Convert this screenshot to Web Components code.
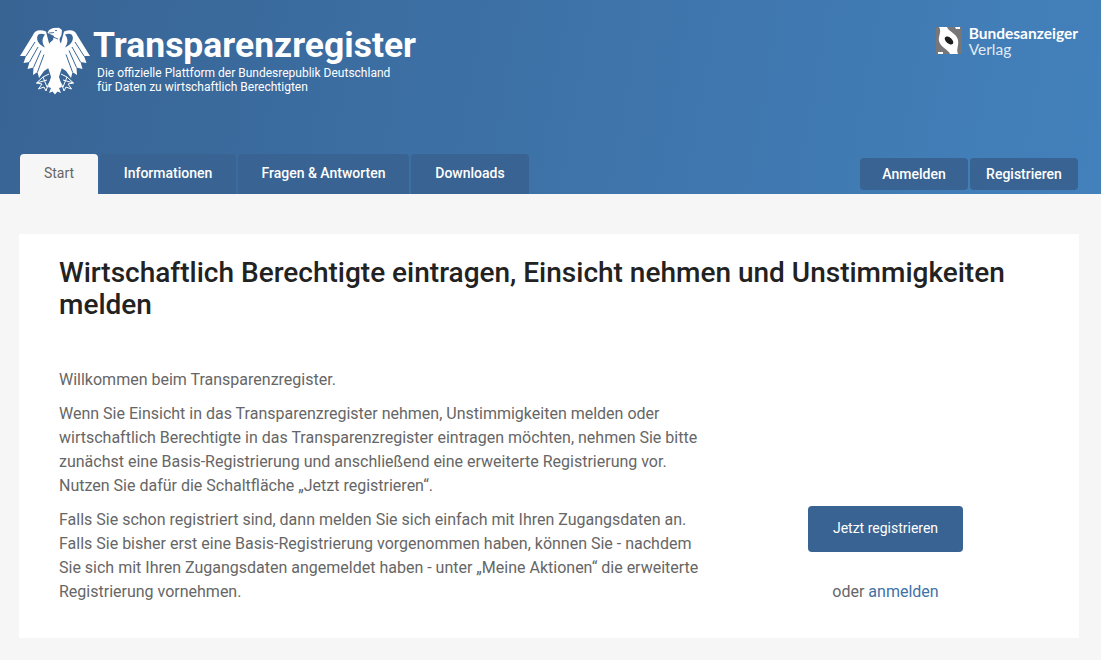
<!DOCTYPE html>
<html lang="de">
<head>
<meta charset="utf-8">
<title>Transparenzregister</title>
<style>
	html, body { margin: 0; padding: 0; background: #f6f6f6; }
	body { font-family: Roboto, "Liberation Sans", sans-serif; }
</style>
</head>
<body>
<tr-header>
	<tr-tab slot="tabs" active>Start</tr-tab>
	<tr-tab slot="tabs" width="136">Informationen</tr-tab>
	<tr-tab slot="tabs" width="171">Fragen &amp; Antworten</tr-tab>
	<tr-tab slot="tabs" width="118">Downloads</tr-tab>
	<tr-login slot="actions">Anmelden</tr-login>
	<tr-login slot="actions">Registrieren</tr-login>
</tr-header>
<tr-main>
	<h1 slot="title">Wirtschaftlich Berechtigte eintragen, Einsicht nehmen und Unstimmigkeiten melden</h1>
	<p>Willkommen beim Transparenzregister.</p>
	<p>Wenn Sie Einsicht in das Transparenzregister nehmen, Unstimmigkeiten melden oder<br>wirtschaftlich Berechtigte in das Transparenzregister eintragen möchten, nehmen Sie bitte<br>zunächst eine Basis-Registrierung und anschließend eine erweiterte Registrierung vor.<br>Nutzen Sie dafür die Schaltfläche „Jetzt registrieren“.</p>
	<p>Falls Sie schon registriert sind, dann melden Sie sich einfach mit Ihren Zugangsdaten an.<br>Falls Sie bisher erst eine Basis-Registrierung vorgenommen haben, können Sie - nachdem<br>Sie sich mit Ihren Zugangsdaten angemeldet haben - unter „Meine Aktionen“ die erweiterte<br>Registrierung vornehmen.</p>
</tr-main>

<script>
class TrEagle extends HTMLElement {
	constructor() {
		super();
		this.attachShadow({ mode: 'open' });
		this.shadowRoot.innerHTML = `
			<style>
				:host { display: block; flex: none; width: 70px; height: 68px; }
				svg { display: block; }
			</style>
			<svg width="70" height="68" viewBox="0 0 70 68">
				<defs>
					<g id="half">
						<!-- wing outline with feather tips -->
						<path fill="#fff" d="M26 4.5 C20 2 14.5 3 13 8 L0 29 L6 29 L3.5 36 L9.5 35 L7.5 42 L13.5 40.5 L13 48 L17.5 45 L19 51 L24 44 L30 40 L30 20 Z"/>
						<!-- crescent between arc and shoulder -->
						<path fill="#3a6899" d="M25 7.5 C20.5 5.8 17.7 7 17.2 10 C16.6 14 19.5 18 25 20.5 C22 16 21.5 12 25 7.5Z"/>
						<!-- gaps between the feathers -->
						<path fill="none" stroke="#3a6899" stroke-width="1" d="M6 29 L15 15 M9.5 35 L18 20 M13.5 40.5 L21 23.5 M17.5 45 L24 27.5"/>
						<!-- talon -->
						<path fill="none" stroke="#fff" stroke-width="1" d="M29 47 L23 50 L16.5 56 L22 57 L18.5 62 L24 60 L26 64 L28 58 L30 55 M23 50 L27 60 M16.5 56 L27 53"/>
					</g>
				</defs>
				<use href="#half"/>
				<use href="#half" transform="matrix(-1 0 0 1 70 0)"/>
				<!-- head, body, tail -->
				<path fill="#fff" d="M27.5 6 L29 3 L33 1 L39 .8 L42 3 L41.5 8 L39.5 12 L40 15 L43 20 L44 30 L42.5 39 L40.5 45 L39 50 L41 56 L42 60 L39 61 L41 66 L37.5 64.5 L35 67.5 L32.5 64.5 L29 66 L31 61 L28 60 L29 56 L31 50 L29.5 45 L27.5 39 L26 30 L27 20 L30 15.5 L33 13 L34 9 L31 7.5 Z"/>
				<path fill="none" stroke="#3a6899" stroke-width=".9" d="M29 6 L34 5.5 M35 3.5 L37 3.5 M33 10 L38 12"/>
			</svg>`;
	}
}
customElements.define('tr-eagle', TrEagle);

class TrVerlag extends HTMLElement {
	constructor() {
		super();
		this.attachShadow({ mode: 'open' });
		this.shadowRoot.innerHTML = `
			<style>
				:host { display: flex; align-items: flex-start; gap: 7px; color: #fff; }
				.txt { margin-top: -2px; font: 700 15.5px/16px Lato, sans-serif; white-space: nowrap; }
				.txt span { display: block; font-weight: 400; opacity: .85; }
				svg { display: block; }
			</style>
			<svg width="26" height="27" viewBox="0 0 26 27">
				<rect width="26" height="27" fill="#77777a"/>
				<path fill="#fff" d="M3 0 H11 C12 4 21 7 22 13 C23 19 20 22 22 27 H14 C13 23 4 20 3 14 C2 9 6 5 3 0Z"/>
				<path fill="#fff" d="M19 0 H24 V2 H20Z M2 25 H7 L7 27 H2Z"/>
				<ellipse cx="13" cy="13.5" rx="5" ry="3" fill="#1e1e1e" transform="rotate(40 13 13.5)"/>
			</svg>
			<div class="txt">Bundesanzeiger<span>Verlag</span></div>`;
	}
}
customElements.define('tr-verlag', TrVerlag);

class TrHeader extends HTMLElement {
	constructor() {
		super();
		this.attachShadow({ mode: 'open' });
		this.shadowRoot.innerHTML = `
			<style>
				:host { display: block; height: 194px; background: linear-gradient(100deg, #386494 0%, #4381bc 100%); color: #fff; }
				.inner { height: 100%; box-sizing: border-box; padding: 27px 23px 0 20px; display: flex; flex-direction: column; justify-content: space-between; }
				.top { display: flex; justify-content: space-between; align-items: flex-start; }
				.brand { display: flex; gap: 3px; }
				h1 { margin: 0; font: 700 35.5px/37px Roboto, sans-serif; }
				.sub { margin: 2px 0 0 4px; font: 400 12px/14px Roboto, sans-serif; }
				nav { display: flex; justify-content: space-between; align-items: flex-end; }
				.tabs { display: flex; gap: 2px; }
				.actions { display: flex; gap: 2px; padding-bottom: 4px; }
			</style>
			<div class="inner">
				<div class="top">
					<div class="brand">
						<tr-eagle></tr-eagle>
						<div>
							<h1>Transparenzregister</h1>
							<p class="sub">Die offizielle Plattform der Bundesrepublik Deutschland<br>für Daten zu wirtschaftlich Berechtigten</p>
						</div>
					</div>
					<tr-verlag></tr-verlag>
				</div>
				<nav>
					<div class="tabs"><slot name="tabs"></slot></div>
					<div class="actions"><slot name="actions"></slot></div>
				</nav>
			</div>`;
	}
}
customElements.define('tr-header', TrHeader);

class TrTab extends HTMLElement {
	constructor() {
		super();
		this.attachShadow({ mode: 'open' });
		this.shadowRoot.innerHTML = `
			<style>
				:host { display: flex; align-items: center; justify-content: center; box-sizing: border-box; height: 40px; width: 78px; padding-bottom: 2px;
					background: #396392; color: #fff; font: 500 14px Roboto, sans-serif; border-radius: 4px 4px 0 0; }
				:host([active]) { background: #f6f6f6; color: #666; font-weight: 400; }
			</style>
			<slot></slot>`;
	}

	connectedCallback() {
		if (this.hasAttribute('width')) {
			this.style.width = this.getAttribute('width') + 'px';
		}
	}
}
customElements.define('tr-tab', TrTab);

class TrLogin extends HTMLElement {
	constructor() {
		super();
		this.attachShadow({ mode: 'open' });
		this.shadowRoot.innerHTML = `
			<style>
				:host { display: flex; align-items: center; justify-content: center; width: 108px; height: 32px;
					background: #396392; color: #fff; font: 500 14px Roboto, sans-serif; border-radius: 4px; }
			</style>
			<slot></slot>`;
	}
}
customElements.define('tr-login', TrLogin);

class TrMain extends HTMLElement {
	constructor() {
		super();
		this.attachShadow({ mode: 'open' });
		this.shadowRoot.innerHTML = `
			<style>
				:host { display: block; box-sizing: border-box; width: 1060px; height: 404px; margin: 40px 0 0 19px; padding: 23px 40px 0; background: #fff; color: #666; }
				::slotted(h1) { margin: 0 0 47px; font: 500 28px/32px Roboto, sans-serif; color: #222; }
				::slotted(p) { margin: 0 0 10px; font: 400 16px/24px Roboto, sans-serif; white-space: nowrap; }
				.cols { display: flex; }
				.text { width: 669px; }
				.cta { flex: 1; display: flex; flex-direction: column; align-items: center; justify-content: flex-end; padding: 0 0 10px 4px; }
				.btn { display: flex; align-items: center; justify-content: center; box-sizing: border-box; width: 155px; height: 46px; padding-bottom: 2px; background: #396392; color: #fff; font: 400 14px Roboto, sans-serif; border-radius: 4px; }
				.or { margin: 28px 0 0; font: 400 16px/24px Roboto, sans-serif; }
				a { color: #3f72a6; text-decoration: none; }
			</style>
			<slot name="title"></slot>
			<div class="cols">
				<div class="text"><slot></slot></div>
				<div class="cta">
					<div class="btn">Jetzt registrieren</div>
					<div class="or">oder <a href="#">anmelden</a></div>
				</div>
			</div>`;
	}
}
customElements.define('tr-main', TrMain);
</script>
</body>
</html>
